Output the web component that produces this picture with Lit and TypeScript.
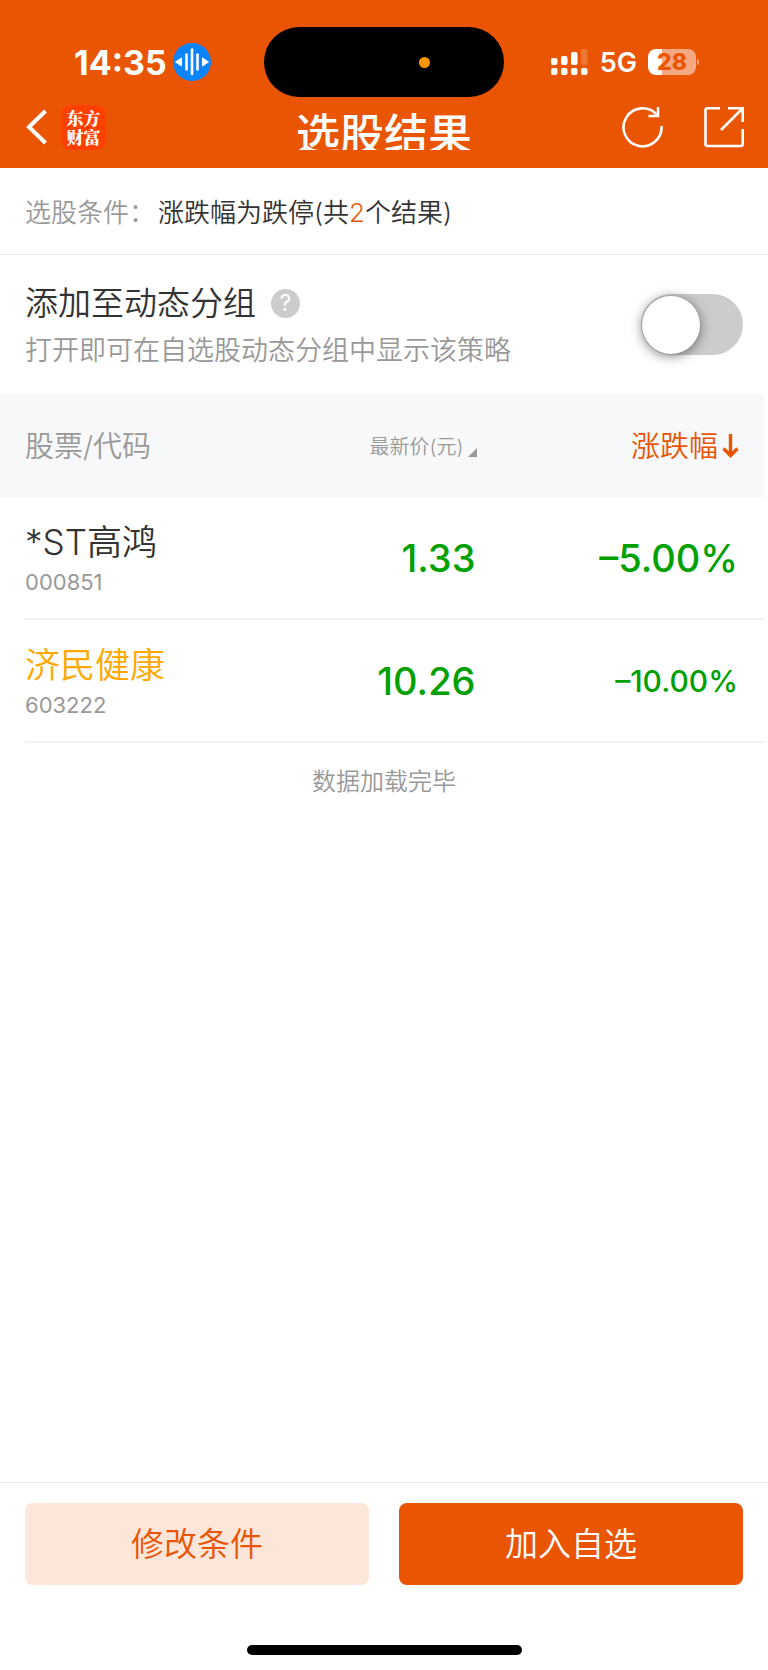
import { LitElement, html, css, svg } from "lit";
import { customElement, state } from "lit/decorators.js";

interface Stock {
  name: string;
  code: string;
  price: string;
  change: string;
  marked?: boolean;
  compact?: boolean;
}

const STOCKS: Stock[] = [
  { name: "*ST高鸿", code: "000851", price: "1.33", change: "–5.00%" },
  { name: "济民健康", code: "603222", price: "10.26", change: "–10.00%", marked: true, compact: true },
];

@customElement("status-bar")
class StatusBar extends LitElement {
  static styles = css`
    :host {
      display: grid;
      grid-template-columns: 1fr 240px 1fr;
      align-items: center;
      padding-top: 27px;
      height: 70px;
      color: #fff;
    }
    .left { display: flex; align-items: center; gap: 6px; padding-left: 74px; }
    .time { font-size: 34px; line-height: 40px; font-weight: 700; padding-top: 2px; }
    .island {
      height: 70px;
      border-radius: 35px;
      background: #000;
      display: flex;
      align-items: center;
      justify-content: flex-end;
      padding-right: 74px;
      box-sizing: border-box;
    }
    .dot { width: 11px; height: 11px; border-radius: 50%; background: #ff9500; }
    .right { display: flex; align-items: center; justify-content: flex-end; padding-right: 68px; }
    .net { font-size: 27px; line-height: 32px; font-weight: 600; margin: 0 11px 0 12px; padding-top: 2px; }
    .battery {
      width: 48px;
      height: 26px;
      border-radius: 8px;
      background: linear-gradient(90deg, #fff 14px, #f5a982 14px);
      color: #ea5504;
      font-size: 23px;
      line-height: 26px;
      font-weight: 800;
      text-align: center;
    }
    svg { display: block; }
  `;

  render() {
    const cols = [0, 10, 20, 30];
    const heights = [7, 9, 13, 16];
    return html`
      <div class="left">
        <span class="time">14:35</span>
        <svg width="38" height="38" viewBox="0 0 38 38">
          <circle cx="19" cy="19" r="19" fill="#0a84ff" />
          <path d="M13.5 11.5v15M19 6.500v24.500M24.500 11.500v15" stroke="#fff" stroke-width="2.600" stroke-linecap="round" />
          <path d="M2.500 19l6-4v8zM35.500 19l-6-4v8z" fill="#fff" stroke="#fff" stroke-linejoin="round" />
        </svg>
      </div>
      <div class="island"><span class="dot"></span></div>
      <div class="right">
        <svg width="37" height="26" viewBox="0 0 37 26" fill="#fff">
          ${cols.map((x, i) => svg`
            <rect x=${x} y=${16 - heights[i]} width="6.500" height=${heights[i]} rx="2" opacity=${i === 3 ? 0.2 : 1} />
            <rect x=${x} y="19" width="6.500" height="7" rx="2" />`)}
        </svg>
        <span class="net">5G</span>
        <span class="battery">28</span>
        <svg width="4" height="8" viewBox="0 0 4 8"><path d="M1.500 1q2.500 3 0 6z" fill="#f5a982" stroke="#f5a982" /></svg>
      </div>
    `;
  }
}

@customElement("nav-bar")
class NavBar extends LitElement {
  static styles = css`
    :host {
      display: grid;
      grid-template-columns: 1fr auto 1fr;
      align-items: start;
      height: 71px;
      padding: 0 24px;
      color: #fff;
    }
    .group { display: flex; align-items: center; height: 60px; }
    .end { justify-content: flex-end; gap: 40px; }
    button { border: 0; padding: 0; background: none; color: inherit; cursor: pointer; }
    svg { display: block; fill: none; stroke: #fff; }
    .logo {
      width: 45px;
      height: 45px;
      box-sizing: border-box;
      margin-left: 13px;
      padding-top: 3px;
      border-radius: 10px;
      background: #ff4000;
      text-align: center;
      font: 900 17px/19px "Noto Serif CJK SC", "Noto Sans CJK SC", serif;
      color: #fff;
    }
    .title {
      margin: 13px 0 0;
      height: 40px;
      overflow: hidden;
      font-size: 44px;
      line-height: 50px;
      font-weight: 500;
    }
  `;

  render() {
    return html`
      <div class="group">
        <button aria-label="返回">
          <svg width="24" height="36" viewBox="0 0 24 36" stroke-width="4"><path d="M21.500 2L5 18l16.500 16" /></svg>
        </button>
        <div class="logo">东方<br />财富</div>
      </div>
      <h1 class="title">选股结果</h1>
      <div class="group end">
        <button aria-label="刷新">
          <svg width="42" height="42" viewBox="0 0 42 42" stroke-width="2.600">
            <path d="M39.500 20A19 19 0 1 1 35 9" />
            <path d="M36 1v9H26.500" />
          </svg>
        </button>
        <button aria-label="分享">
          <svg width="40" height="42" viewBox="0 0 40 42" stroke-width="2.600">
            <path d="M16 2.300H3.500a2 2 0 0 0-2 2V38a2 2 0 0 0 2 2h33.200a2 2 0 0 0 2-2V23" />
            <path d="M24 2.300h14.700V16M38 3L17 24" />
          </svg>
        </button>
      </div>
    `;
  }
}

@customElement("app-root")
class AppRoot extends LitElement {
  @state() private grouped = false;

  static styles = css`
    :host {
      display: flex;
      flex-direction: column;
      min-height: 100vh;
      background: #fff;
      color: #333;
      font-family: Inter, "Noto Sans CJK SC", sans-serif;
      font-weight: 350;
    }
    .top { background: #ea5504; }
    .condition {
      display: flex;
      gap: 3px;
      padding: 26px 25px 22px;
      border-bottom: 1px solid #ebebeb;
      font-size: 26px;
      line-height: 38px;
    }
    .muted { color: #999; }
    .accent { color: #ea5504; }
    .group {
      display: flex;
      align-items: flex-start;
      justify-content: space-between;
      padding: 25px 25px 18px;
    }
    .heading { display: flex; align-items: center; gap: 15px; }
    .heading label { font-size: 33px; line-height: 46px; }
    .help {
      width: 29px;
      height: 29px;
      border: 0;
      padding: 0;
      border-radius: 50%;
      background: #ccc;
      color: #fff;
      font: 400 23px/29px Inter, sans-serif;
    }
    .hint { margin: 0; font-size: 27px; line-height: 50px; color: #999; }
    .switch {
      appearance: none;
      flex: none;
      display: flex;
      align-items: center;
      box-sizing: border-box;
      width: 102px;
      height: 61px;
      margin: 14px 0 0;
      padding: 0 1px;
      border-radius: 31px;
      background: #ccc;
      cursor: pointer;
    }
    .switch::before {
      content: "";
      width: 58px;
      height: 58px;
      border-radius: 50%;
      background: #fff;
      box-shadow: 0 2px 12px rgba(0, 0, 0, 0.5);
    }
    .switch:checked { background: #ea5504; justify-content: flex-end; }
    .stocks { margin-right: 4px; }
    table { width: 100%; border-collapse: collapse; table-layout: fixed; }
    th, td { box-sizing: border-box; padding: 0; font-weight: 350; text-align: right; }
    .first { width: 40%; padding-left: 25px; text-align: left; }
    .middle { width: 22.5%; }
    th { height: 103px; padding-bottom: 4px; background: #f7f8fa; font-size: 29px; color: #999; }
    .sort {
      display: inline-flex;
      align-items: center;
      border: 0;
      padding: 0;
      background: none;
      font: inherit;
      color: inherit;
    }
    .small { font-size: 20px; gap: 5px; }
    .small svg { margin-top: 14px; }
    .change-head { padding-right: 25px; color: #ea5504; }
    .change-head .sort { gap: 4px; }
    .change-head svg { margin-top: 3px; }
    td { height: 121px; color: #00a000; font-size: 38px; font-weight: 500; }
    .price { padding-right: 2px; }
    .change { padding-right: 26px; }
    .compact { font-size: 30px; }
    td.first { font-weight: 350; }
    .name { font-size: 35px; line-height: 48px; color: #333; }
    .marked { color: #ffa800; }
    .code { font-size: 22px; line-height: 32px; font-weight: 400; color: #999; }
    .line td { height: 2px; padding-left: 25px; }
    .line div { height: 2px; background: #f2f2f2; }
    .done { margin: 0; padding-top: 21px; text-align: center; font-size: 24px; line-height: 36px; color: #999; }
    .actions {
      display: grid;
      grid-template-columns: 1fr 1fr;
      gap: 30px;
      margin-top: auto;
      padding: 20px 25px 60px;
      border-top: 1px solid #ebebeb;
    }
    .actions button {
      height: 82px;
      border: 0;
      padding: 0 0 4px;
      border-radius: 8px;
      font: inherit;
      font-size: 33px;
    }
    .plain { background: #fce6da; color: #ea5504; }
    .primary { background: #ea5504; color: #fff; }
    .home { align-self: center; width: 275px; height: 10px; margin-bottom: 15px; border-radius: 5px; background: #000; }
    svg { display: block; }
  `;

  private row(s: Stock) {
    return html`
      <tr>
        <td class="first">
          <div class="name ${s.marked ? "marked" : ""}">${s.name}</div>
          <div class="code">${s.code}</div>
        </td>
        <td class="price">${s.price}</td>
        <td class="change ${s.compact ? "compact" : ""}">${s.change}</td>
      </tr>
      <tr class="line" aria-hidden="true"><td colspan="3"><div></div></td></tr>
    `;
  }

  render() {
    return html`
      <header class="top">
        <status-bar></status-bar>
        <nav-bar></nav-bar>
      </header>
      <div class="condition">
        <span class="muted">选股条件：</span>
        <span>涨跌幅为跌停(共<span class="accent">2</span>个结果)</span>
      </div>
      <section class="group">
        <div>
          <div class="heading">
            <label for="dynamic">添加至动态分组</label>
            <button class="help" aria-label="说明">?</button>
          </div>
          <p class="hint">打开即可在自选股动态分组中显示该策略</p>
        </div>
        <input
          id="dynamic"
          class="switch"
          type="checkbox"
          role="switch"
          .checked=${this.grouped}
          @change=${(e: Event) => (this.grouped = (e.target as HTMLInputElement).checked)}
        />
      </section>
      <div class="stocks">
        <table>
          <thead>
            <tr>
              <th class="first">股票/代码</th>
              <th class="middle">
                <button class="sort small">
                  最新价(元)
                  <svg width="9" height="9" viewBox="0 0 9 9"><path d="M9 0v9H0z" fill="#999" /></svg>
                </button>
              </th>
              <th class="change-head">
                <button class="sort">
                  涨跌幅
                  <svg width="17" height="25" viewBox="0 0 17 25" fill="none" stroke="#ea5504" stroke-width="3.400">
                    <path d="M8.500 1v21M1.500 15.500l7 7 7-7" />
                  </svg>
                </button>
              </th>
            </tr>
          </thead>
          <tbody>
            ${STOCKS.map((s) => this.row(s))}
          </tbody>
        </table>
      </div>
      <p class="done">数据加载完毕</p>
      <footer class="actions">
        <button class="plain">修改条件</button>
        <button class="primary">加入自选</button>
      </footer>
      <div class="home"></div>
    `;
  }
}
